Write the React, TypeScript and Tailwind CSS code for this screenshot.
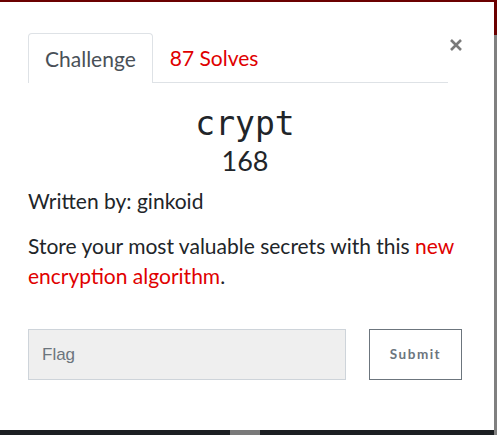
import React from "react";

export default function App() {
  return (
    <div className="relative w-[497px] h-[435px] overflow-hidden bg-[#1c1f22] font-['Lato',sans-serif]">
      <div className="h-[2px] bg-[#6b0000]" />
      <div className="flex h-[428px]">
        <div className="w-[494px] bg-white pl-[28px] pr-[32px] pt-[31px]">
          <div className="flex items-start">
            <ul className="flex flex-1 border-b border-[#dee2e6] h-[50px]">
              <li className="h-[50px] px-[16px] flex items-center border border-b-0 border-[#dee2e6] rounded-t-[4px] bg-white text-[21px] text-[#495057] -mb-px">
                Challenge
              </li>
              <li className="h-[49px] px-[17px] flex items-center text-[21px] text-[#e00000]">
                87 Solves
              </li>
            </ul>
            <button className="ml-[1px] mt-[5px] w-[13px] h-[13px] flex items-center justify-center">
              <svg width="12" height="12" viewBox="0 0 12 12">
                <path d="M1 1 L11 11 M11 1 L1 11" stroke="#7a7a7a" strokeWidth="2.6" strokeLinecap="butt" />
              </svg>
            </button>
          </div>
          <div>
            <div className="mt-[21px] text-center font-['DejaVu_Sans_Mono',monospace] text-[33px] leading-[40px] text-[#212529]">
              crypt
            </div>
            <div className="text-center text-[27px] leading-[34px] text-[#212529]">
              168
            </div>
            <p className="mt-[8px] text-[21px] leading-[30px] text-[#212529]">Written by: ginkoid</p>
            <p className="mt-[15px] text-[21px] leading-[30px] text-[#212529]">
              Store your most valuable secrets with this{" "}
              <span className="text-[#e00000]">new encryption algorithm</span>.
            </p>
            <div className="mt-[38px] flex gap-[23px]">
              <div className="w-[318px] h-[51px] shrink-0 border border-[#ced4da] bg-[#efefef] flex items-center pl-[13px] font-['Liberation_Sans',sans-serif] text-[17px] text-[#6c757d]">
                Flag
              </div>
              <button className="w-[93px] h-[51px] shrink-0 border border-[#6c757d] bg-white font-['Lato',sans-serif] font-bold text-[13.5px] tracking-[1.5px] text-[#6c757d]">
                Submit
              </button>
            </div>
          </div>
        </div>
        <div className="w-[3px] flex flex-col">
          <div className="h-[33px] bg-[#6b0000]" />
          <div className="flex-1 bg-[#808080]" />
        </div>
      </div>
      <div className="flex h-[5px]">
        <div className="w-[230px]" />
        <div className="w-[30px] bg-[#7a7a7a]" />
        <div className="flex-1" />
        <div className="w-[3px] bg-[#808080]" />
      </div>
    </div>
  );
}
